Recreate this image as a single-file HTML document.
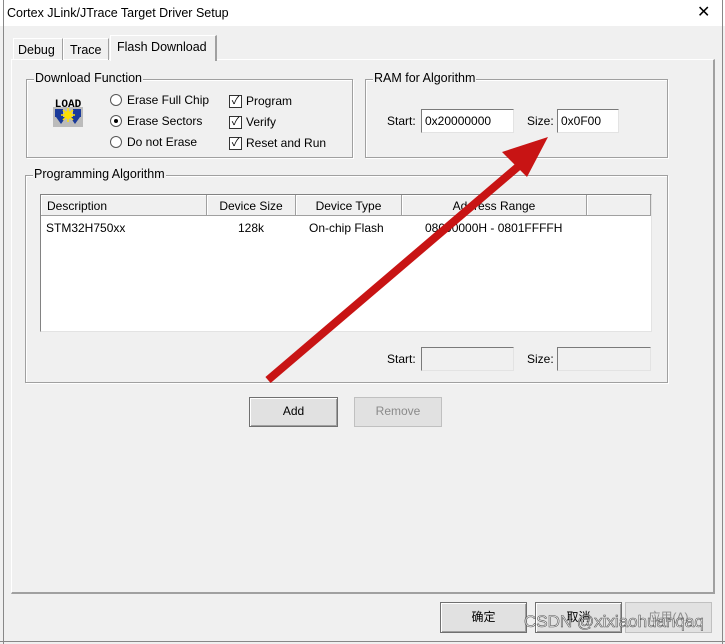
<!DOCTYPE html>
<html><head><style>
*{box-sizing:border-box}
body{margin:0;width:725px;height:644px;background:#f0f0f0;font-family:"Liberation Sans","Noto Sans CJK SC",sans-serif;font-size:12px;color:#000;position:relative;overflow:hidden;white-space:nowrap}
.a{position:absolute}
.grp{position:absolute;border:1px solid #a0a0a0;box-shadow:1px 1px 0 #fff inset,1px 1px 0 #fff}
.gl{position:absolute;top:-9px;left:7px;background:#f0f0f0;padding:0 1px;font-size:12.5px}
.inp{position:absolute;background:#fff;border:1px solid #7a7a7a;border-right-color:#e3e3e3;border-bottom-color:#e3e3e3;padding:4px 3px;font-size:12px;height:24px}
.inp.d{background:#f0f0f0}
.btn{position:absolute;border:1px solid #707070;background:#e1e1e1;text-align:center;font-size:12px;box-shadow:inset 1px 1px 0 #fff,inset -1px -1px 0 #a0a0a0}
.chk{position:absolute;width:13px;height:13px;border:1px solid #333;background:#fff;font-size:11px;line-height:11px;text-align:center}
.rad{position:absolute;width:12px;height:12px;border:1px solid #555;border-radius:50%;background:#fff}
.hd{position:absolute;top:0;height:21px;border-right:1px solid #a0a0a0;border-bottom:1px solid #a0a0a0;background:#f0f0f0;box-shadow:inset 1px 1px 0 #fff;padding:4px 6px;font-size:12px}
</style></head><body>
<div class="a" style="left:0;top:0;width:725px;height:26px;background:#fff"></div>
<div class="a" style="left:7px;top:6px;font-size:12.5px">Cortex JLink/JTrace Target Driver Setup</div>
<div class="a" style="left:697px;top:2px;font-size:16px">✕</div>
<div class="a" style="left:3px;top:0;width:1px;height:644px;background:#888"></div>
<div class="a" style="left:722px;top:0;width:1px;height:644px;background:#888"></div>
<div class="a" style="left:0;top:641px;width:725px;height:1px;background:#888"></div>
<div class="a" style="left:11px;top:59px;width:704px;height:535px;border:1px solid #fff;border-right:2px solid #a0a0a0;border-bottom:2px solid #a0a0a0"></div>
<div class="a" style="left:13px;top:38px;width:50px;height:22px;border:1px solid #fff;border-right:1px solid #a0a0a0;border-bottom:none;padding:4px 4px;font-size:12.5px">Debug</div>
<div class="a" style="left:63px;top:38px;width:46px;height:22px;border:1px solid #fff;border-right:1px solid #a0a0a0;border-bottom:none;padding:4px 6px;font-size:12.5px">Trace</div>
<div class="a" style="left:110px;top:35px;width:107px;height:26px;border:1px solid #fff;border-right:2px solid #a0a0a0;border-bottom:none;background:#f0f0f0;padding:4px 6px;font-size:12.5px">Flash Download</div>
<div class="grp" style="left:26px;top:79px;width:327px;height:79px"><span class="gl">Download Function</span></div>
<svg class="a" style="left:52px;top:97px" width="32" height="32" viewBox="0 0 32 32">
<rect x="1" y="10" width="30" height="20" fill="#bbb"/>
<text x="16" y="10" font-family="Liberation Mono" font-weight="bold" font-size="11" text-anchor="middle">LOAD</text>
<path d="M3 12h8v8h3l-5 7-5-7h-1z M29 12h-8v8h-3l5 7 5-7h1z" fill="#1a3a9a"/>
<circle cx="16" cy="18" r="4" fill="#ffe000"/>
<path d="M16 11v14M9 18h14M11 13l10 10M21 13l-10 10" stroke="#ffe000" stroke-width="1.5"/>
</svg>
<div class="rad" style="left:110px;top:94px"></div><div class="a" style="left:127px;top:93px">Erase Full Chip</div>
<div class="rad" style="left:110px;top:115px"><div class="a" style="left:3px;top:3px;width:4px;height:4px;border-radius:50%;background:#000"></div></div><div class="a" style="left:127px;top:114px">Erase Sectors</div>
<div class="rad" style="left:110px;top:136px"></div><div class="a" style="left:127px;top:135px">Do not Erase</div>
<div class="chk" style="left:229px;top:95px">✓</div><div class="a" style="left:246px;top:94px">Program</div>
<div class="chk" style="left:229px;top:116px">✓</div><div class="a" style="left:246px;top:115px">Verify</div>
<div class="chk" style="left:229px;top:137px">✓</div><div class="a" style="left:246px;top:136px">Reset and Run</div>
<div class="grp" style="left:365px;top:79px;width:303px;height:79px"><span class="gl">RAM for Algorithm</span></div>
<div class="a" style="left:387px;top:114px">Start:</div>
<div class="inp" style="left:421px;top:109px;width:93px">0x20000000</div>
<div class="a" style="left:527px;top:114px">Size:</div>
<div class="inp" style="left:557px;top:109px;width:62px">0x0F00</div>
<div class="grp" style="left:25px;top:175px;width:643px;height:208px"><span class="gl">Programming Algorithm</span></div>
<div class="a" style="left:40px;top:194px;width:612px;height:138px;background:#fff;border:1px solid #828282;border-right-color:#e3e3e3;border-bottom-color:#e3e3e3">
<div class="hd" style="left:0;width:166px">Description</div>
<div class="hd" style="left:166px;width:89px;text-align:center">Device Size</div>
<div class="hd" style="left:255px;width:106px;text-align:center">Device Type</div>
<div class="hd" style="left:361px;width:185px;text-align:center">Address Range</div>
<div class="hd" style="left:546px;width:64px"></div>
<div class="a" style="left:5px;top:26px">STM32H750xx</div>
<div class="a" style="left:197px;top:26px">128k</div>
<div class="a" style="left:268px;top:26px">On-chip Flash</div>
<div class="a" style="left:384px;top:26px">08000000H - 0801FFFFH</div>
</div>
<div class="a" style="left:387px;top:352px">Start:</div>
<div class="inp d" style="left:421px;top:347px;width:93px"></div>
<div class="a" style="left:527px;top:352px">Size:</div>
<div class="inp d" style="left:557px;top:347px;width:94px"></div>
<div class="btn" style="left:249px;top:397px;width:89px;height:30px;line-height:27px">Add</div>
<div class="btn" style="left:354px;top:397px;width:88px;height:30px;line-height:27px;color:#8a8a8a;box-shadow:none;border-color:#c0c0c0">Remove</div>
<div class="btn" style="left:440px;top:602px;width:87px;height:31px;line-height:28px">确定</div>
<div class="btn" style="left:535px;top:602px;width:87px;height:31px;line-height:28px">取消</div>
<div class="btn" style="left:625px;top:602px;width:87px;height:31px;line-height:28px;color:#8a8a8a;border-color:#c0c0c0;box-shadow:none">应用(A)</div>
<div class="a" style="left:524px;top:612px;font-size:17px;color:rgba(255,255,255,.6);-webkit-text-stroke:0.6px #555">CSDN @xixiaohuanqaq</div>
<svg class="a" style="left:0;top:0" width="725" height="644">
<line x1="268" y1="380" x2="520" y2="165" stroke="#c81414" stroke-width="8"/>
<polygon points="548,137 502,152 527,177" fill="#c81414"/>
</svg>
</body></html>
